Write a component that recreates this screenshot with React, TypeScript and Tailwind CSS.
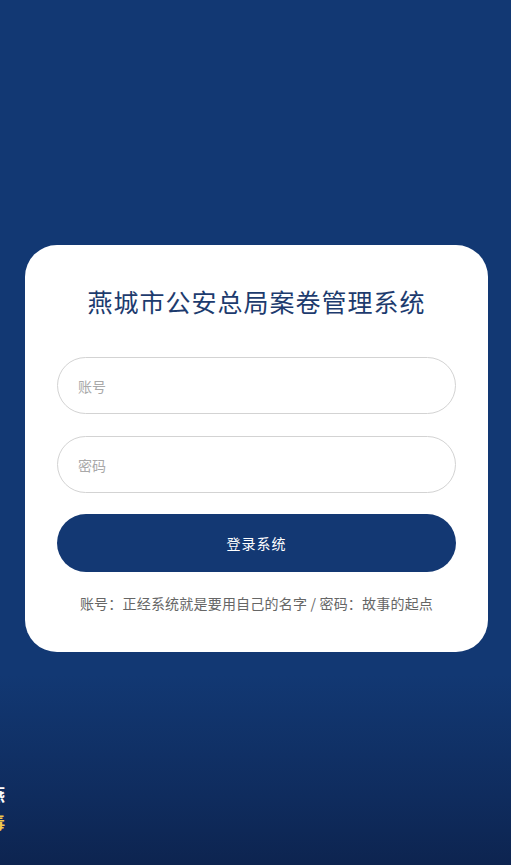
import React from "react";

export default function App() {
  const font = { fontFamily: '"Noto Sans CJK SC", "Noto Sans", sans-serif' };
  return (
    <div
      className="relative w-[511px] h-[865px] overflow-hidden bg-[linear-gradient(to_bottom,#123873_0%,#123873_78%,#0f2c5e_92%,#0d2450_100%)]"
      style={font}
    >
      <div className="flex flex-col pt-[245px] pl-[25px]">
        <div className="w-[463px] bg-white rounded-[32px] px-[32px] pt-[39px] pb-[39px] flex flex-col">
          <h1 className="text-center text-[25px] leading-[34px] text-[#1d3b6e] font-normal tracking-[1px]">
            燕城市公安总局案卷管理系统
          </h1>
          <div className="mt-[39px] flex flex-col gap-[22px]">
            <input
              placeholder="账号"
              className="h-[57px] w-full rounded-full border-[1.5px] border-[#d3d3d3] px-[20px] text-[14px] text-[#333] placeholder:text-[#a9a9a9] outline-none"
              style={font}
            />
            <input
              placeholder="密码"
              type="password"
              className="h-[57px] w-full rounded-full border-[1.5px] border-[#d3d3d3] px-[20px] text-[14px] text-[#333] placeholder:text-[#a9a9a9] outline-none"
              style={font}
            />
          </div>
          <button
            className="mt-[21px] h-[58px] w-full rounded-full bg-[#133873] text-white text-[14px] tracking-[1px]"
            style={font}
          >
            登录系统
          </button>
          <p className="mt-[21px] text-center text-[14px] leading-[20px] text-[#666666] tracking-[0.2px]">
            账号：正经系统就是要用自己的名字 / 密码：故事的起点
          </p>
        </div>
      </div>
      <div className="absolute left-[-12px] top-[784px] text-[17px] leading-[20px] font-bold text-white">
        燕
      </div>
      <div className="absolute left-[-12px] top-[812px] text-[17px] leading-[20px] font-bold text-[#f2c94c]">
        毒
      </div>
    </div>
  );
}
